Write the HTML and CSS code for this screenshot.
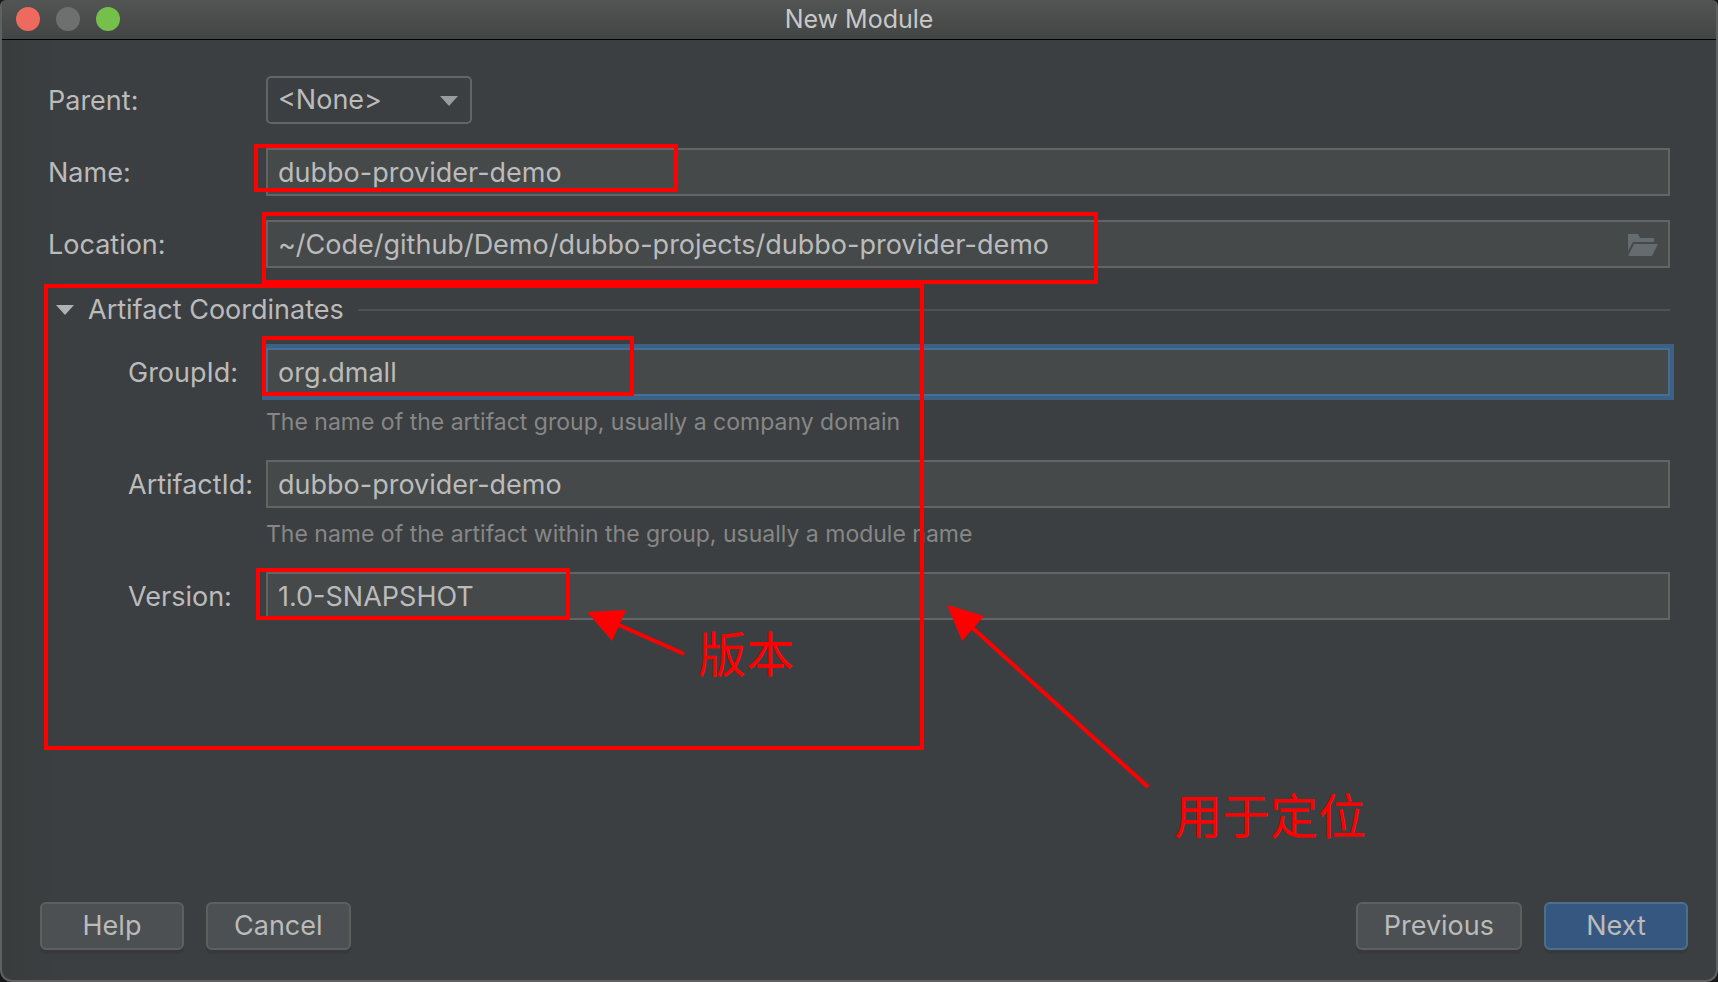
FILE: index.html
```html
<!DOCTYPE html>
<html lang="en">
<head>
  <meta charset="UTF-8" />
  <meta name="viewport" content="width=device-width, initial-scale=1" />
  <title>New Module</title>
  <link rel="stylesheet" href="styles.css">
</head>
<body>
  <div class="window">
    <header class="titlebar">
      <div class="window-buttons">
        <button type="button" class="dot close" aria-label="Close"></button>
        <button type="button" class="dot minimize" aria-label="Minimize" disabled></button>
        <button type="button" class="dot maximize" aria-label="Maximize"></button>
      </div>
      <h1>New Module</h1>
    </header>

    <form class="module-form">
      <div class="row">
        <label for="parent">Parent:</label>
        <div class="select-wrap">
          <select id="parent">
            <option>&lt;None&gt;</option>
          </select>
          <svg class="select-arrow" width="18" height="10" viewBox="0 0 18 10" aria-hidden="true"><path d="M0 0h18L9 10z" /></svg>
        </div>
      </div>
      <div class="row">
        <label for="name">Name:</label>
        <input type="text" id="name" value="dubbo-provider-demo" />
      </div>
      <div class="row">
        <label for="location">Location:</label>
        <div class="path-field">
          <input type="text" id="location" value="~/Code/github/Demo/dubbo-projects/dubbo-provider-demo" />
          <button type="button" class="browse" aria-label="Browse">
            <svg width="30" height="22" viewBox="0 0 30 22" aria-hidden="true">
              <path d="M0 0h10l2 4h14v4H5L0 17z" />
              <path d="M6 10h24l-6 12H0z" />
            </svg>
          </button>
        </div>
      </div>

      <details class="coordinates" open>
        <summary>
          <svg width="18" height="10" viewBox="0 0 18 10" aria-hidden="true"><path d="M0 0h18L9 10z" /></svg>
          <span>Artifact Coordinates</span>
        </summary>
        <div class="row">
          <label for="group-id">GroupId:</label>
          <input type="text" id="group-id" class="focused" value="org.dmall" />
        </div>
        <p class="hint">The name of the artifact group, usually a company domain</p>
        <div class="row">
          <label for="artifact-id">ArtifactId:</label>
          <input type="text" id="artifact-id" value="dubbo-provider-demo" />
        </div>
        <p class="hint">The name of the artifact within the group, usually a module name</p>
        <div class="row">
          <label for="version">Version:</label>
          <input type="text" id="version" value="1.0-SNAPSHOT" />
        </div>
      </details>
    </form>

    <footer class="actions">
      <button type="button">Help</button>
      <button type="button">Cancel</button>
      <button type="button" class="previous">Previous</button>
      <button type="button" class="primary">Next</button>
    </footer>

    <!-- Red notes drawn over the dialog -->
    <svg class="notes" width="1400" height="860" viewBox="0 0 1400 860">
      <g class="box">
        <rect x="256" y="146" width="420" height="44" />
        <rect x="264" y="214" width="832" height="68" />
        <rect x="46" y="286" width="876" height="462" />
        <rect x="264" y="338" width="368" height="56" />
        <rect x="258" y="570" width="310" height="48" />
        <path d="M684 654L612 622" />
        <path d="M1148 787L966 622" />
      </g>
      <path class="head" d="M587 612l39-2-14 31z" />
      <path class="head" d="M947 605l37 11-22 25z" />
      <text x="698" y="672">版本</text>
      <text x="1174" y="834">用于定位</text>
    </svg>
  </div>
</body>
</html>
```
FILE: styles.css
```css
* {
  box-sizing: border-box;
}
body {
  margin: 0;
  background: #16181a;
  color: #bbbbbb;
  font-family: Inter, "Noto Sans CJK SC", sans-serif;
  font-size: 27px;
  line-height: 32px;
}

.window {
  position: relative;
  display: flex;
  flex-direction: column;
  min-height: 100vh;
  overflow: hidden;
  border: 2px solid #5e6061;
  border-top: none;
  border-radius: 6px 6px 12px 12px;
  background: linear-gradient(90deg, #383c3d, #3c3f41 60px);
}

/* Title bar */
.titlebar {
  display: grid;
  grid-template-columns: 1fr auto 1fr;
  align-items: center;
  height: 40px;
  padding: 0 14px 2px;
  border-bottom: 1px solid #000;
  background: linear-gradient(#535554, #434544);
}
.titlebar h1 {
  margin: 0;
  font-size: 25px;
  font-weight: 400;
  color: #c8c8c8;
}
.window-buttons {
  display: flex;
  gap: 16px;
}
.dot {
  width: 24px;
  height: 24px;
  padding: 0;
  border: none;
  border-radius: 50%;
}
.close {
  background: #ee695e;
}
.minimize {
  background: #6e706f;
}
.maximize {
  background: #74c04a;
}

/* Form */
.module-form {
  padding: 36px 46px 0;
}
.row {
  display: flex;
  align-items: center;
  margin-bottom: 24px;
}
.row label {
  flex: 0 0 218px;
  padding-top: 2px;
}
input,
select {
  width: 100%;
  height: 48px;
  padding: 0 10px;
  border: 2px solid #646464;
  border-radius: 0;
  background: #45494a;
  color: #bbbbbb;
  font: inherit;
  outline: none;
}
input.focused {
  border-color: #466d94;
  box-shadow: 0 0 0 4px #3d6185;
}
.select-wrap {
  position: relative;
  width: 206px;
}
select {
  appearance: none;
  border-radius: 5px;
  background: #3c3f41;
}
.select-arrow {
  position: absolute;
  top: 20px;
  right: 14px;
  fill: #9a9da0;
  pointer-events: none;
}
.path-field {
  position: relative;
  flex: 1;
}
.path-field input {
  display: block;
  padding-right: 52px;
}
.browse {
  position: absolute;
  top: 14px;
  right: 12px;
  display: flex;
  padding: 0;
  border: none;
  background: none;
}
.browse svg {
  fill: #646c6f;
}

/* Artifact coordinates */
.coordinates summary {
  display: flex;
  align-items: center;
  gap: 14px;
  margin-bottom: 22px;
  padding: 2px 0 0 8px;
  list-style: none;
}
.coordinates summary svg {
  fill: #afb1b3;
}
.coordinates summary::after {
  content: "";
  flex: 1;
  height: 2px;
  background: #515151;
}
.coordinates .row {
  margin: 0 0 0 80px;
}
.coordinates .row label {
  flex-basis: 138px;
}
.hint {
  margin: 12px 0 24px 218px;
  font-size: 23px;
  line-height: 28px;
  color: #878787;
}

/* Bottom buttons */
.actions {
  display: flex;
  gap: 22px;
  margin-top: auto;
  padding: 24px 28px 30px 38px;
}
.actions button {
  min-width: 144px;
  height: 48px;
  padding: 0 26px;
  border: 2px solid #5e6060;
  border-radius: 6px;
  background: #4c5052;
  box-shadow: 0 4px 0 #37393b;
  color: #bbbbbb;
  font: inherit;
}
.actions .previous {
  margin-left: auto;
}
.actions .primary {
  border-color: #4c708c;
  background: #365880;
}

/* Notes */
.notes {
  position: absolute;
  top: 0;
  left: -2px;
  pointer-events: none;
}
.box {
  fill: none;
  stroke: #ff0000;
  stroke-width: 4;
}
.head,
.notes text {
  fill: #ff0000;
}
.notes text {
  font-family: "Noto Sans CJK SC", sans-serif;
  font-size: 48px;
}
```
